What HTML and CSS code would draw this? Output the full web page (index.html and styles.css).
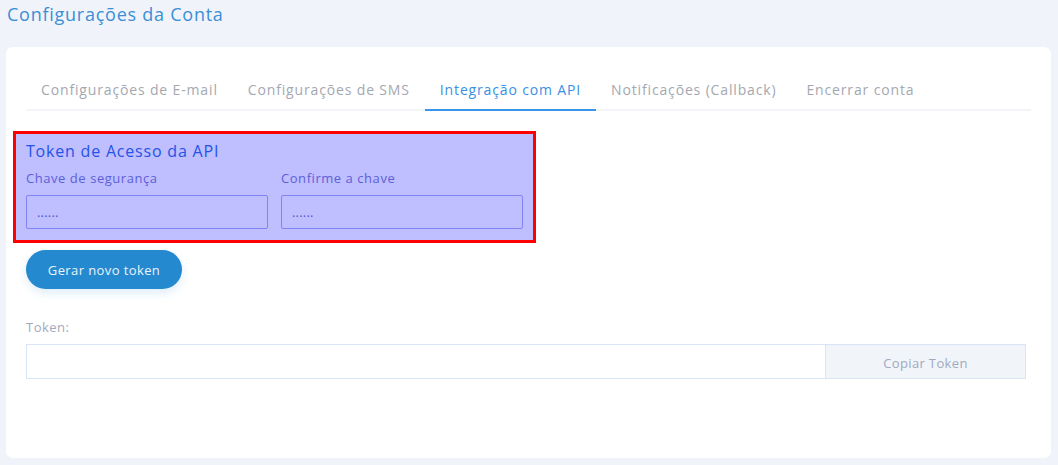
FILE: index.html
```html
<!DOCTYPE html>
<html lang="pt-BR">
<head>
<meta charset="utf-8">
<title>Configurações da Conta</title>
<link rel="stylesheet" href="styles.css">
</head>
<body>
<div class="page">
  <h1 class="page-title">Configurações da Conta</h1>
  <div class="card">
    <nav class="tabs">
      <a class="tab">Configurações de E-mail</a>
      <a class="tab">Configurações de SMS</a>
      <a class="tab active">Integração com API</a>
      <a class="tab">Notificações (Callback)</a>
      <a class="tab">Encerrar conta</a>
    </nav>
    <div class="content">
      <section class="token-section">
        <h2 class="section-title">Token de Acesso da API</h2>
        <div class="fields">
          <div class="field">
            <label class="label">Chave de segurança</label>
            <div class="input">......</div>
          </div>
          <div class="field">
            <label class="label">Confirme a chave</label>
            <div class="input">......</div>
          </div>
        </div>
        <div class="highlight"></div>
      </section>
      <button class="btn-primary">Gerar novo token</button>
      <div class="token-block">
        <label class="label token-label">Token:</label>
        <div class="input-group">
          <div class="token-input"></div>
          <button class="btn-copy">Copiar Token</button>
        </div>
      </div>
    </div>
  </div>
</div>
</body>
</html>
```
FILE: styles.css
```css
* { box-sizing: border-box; }
html, body { margin: 0; padding: 0; }
body {
  background: #f0f3f9;
  font-family: "Open Sans", "Noto Sans", sans-serif;
  width: 1058px;
  height: 465px;
  overflow: hidden;
}
.page { padding: 0 7px 0 6px; }
.page-title {
  margin: 0;
  padding: 2px 0 0 1px;
  height: 47px;
  font-size: 18px;
  font-weight: 400;
  color: #3a8fd6;
  line-height: 24px;
  letter-spacing: 0.75px;
}
.card {
  background: #fff;
  border-radius: 7px;
  height: 411px;
  padding: 22px 20px 0 20px;
}
.tabs {
  display: flex;
  border-bottom: 2px solid #f3f4f8;
  height: 42px;
}
.tab {
  padding: 11px 15px 0;
  font-size: 14px;
  line-height: 20px;
  color: #a4a8b0;
  white-space: nowrap;
  letter-spacing: 0.85px;
}
.tab.active {
  color: #3a8fe6;
  border-bottom: 2px solid #3a95ea;
  margin-bottom: -2px;
}
.content { padding: 0 5px 0 0; }
.token-section {
  position: relative;
  width: 497px;
  margin-top: 30px;
}
.section-title {
  margin: 0;
  font-size: 16px;
  font-weight: 400;
  line-height: 20px;
  color: #2f6fe0;
  letter-spacing: 0.8px;
}
.fields {
  display: flex;
  gap: 13px;
  margin-top: 8px;
}
.field { flex: 1; }
.label {
  display: block;
  font-size: 13px;
  line-height: 18px;
  color: #7c81ca;
  letter-spacing: 0.55px;
}
.input {
  margin-top: 8px;
  height: 34px;
  border: 1px solid #acb0f2;
  border-radius: 2px;
  padding: 0 10px;
  font-size: 13px;
  line-height: 32px;
  color: #6f74c0;
  letter-spacing: 0.2px;
}
.highlight {
  position: absolute;
  top: -10px;
  left: -13px;
  right: -13px;
  bottom: -14px;
  border: 3px solid #ff0000;
  background: rgba(0, 0, 255, 0.25);
  pointer-events: none;
}
.btn-primary {
  display: block;
  margin-top: 21px;
  width: 156px;
  height: 39px;
  border: none;
  border-radius: 20px;
  background: #2489cf;
  color: #eaf3fb;
  font-family: inherit;
  font-size: 13px;
  letter-spacing: 0.4px;
  box-shadow: 0 4px 10px rgba(36, 137, 207, 0.15);
}
.token-block { margin-top: 29px; }
.token-label { color: #a2aabb; letter-spacing: 0.5px; }
.input-group {
  display: flex;
  margin-top: 8px;
  height: 35px;
  border: 1px solid #d8e5f6;
}
.token-input { flex: 1; background: #fff; }
.btn-copy {
  width: 200px;
  border: none;
  border-left: 1px solid #d8e5f6;
  background: #f1f4f9;
  color: #9fa9bf;
  font-family: inherit;
  font-size: 13px;
  letter-spacing: 0.35px;
  padding-top: 4px;
}
```
